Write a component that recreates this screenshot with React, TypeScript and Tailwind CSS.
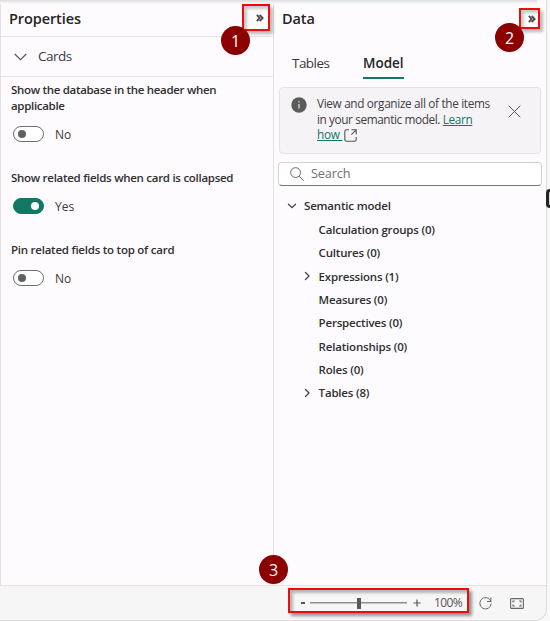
import type { ReactNode } from "react";

type SettingProps = { label: ReactNode; on?: boolean; className: string; track: string };

function Setting({ label, on = false, className, track }: SettingProps) {
  return (
    <div className={`flex flex-col pl-[10px] ${className}`}>
      <div className={`text-[11.5px] leading-[15.5px] font-semibold whitespace-nowrap text-[#302e2f] ${track}`}>{label}</div>
      <div className="mt-[13px] flex h-4 items-center">
        <div
          className={`ml-[2px] flex h-4 w-[31px] shrink-0 items-center rounded-full border px-[4px] ${
            on ? "justify-end border-[#117865] bg-[#117865]" : "border-[#706e6f] bg-white"
          }`}
        >
          <div className={`size-[8px] rounded-full ${on ? "bg-white" : "bg-[#616161]"}`} />
        </div>
        <span className="mt-[2px] ml-[11px] text-[12px] text-[#3b393a]">{on ? "Yes" : "No"}</span>
      </div>
    </div>
  );
}

function Collapse() {
  return (
    <svg width="8" height="8" viewBox="0 0 8 8" fill="none" stroke="#4f4b4d" strokeWidth="1.9">
      <path d="M.9.9 3.5 4 .9 7.1M3.7.9 6.6 4 3.7 7.1" />
    </svg>
  );
}

function Chevron({ open }: { open?: boolean }) {
  return (
    <svg width="10" height="10" viewBox="0 0 10 10" fill="none" stroke="#444" strokeWidth="1.3" strokeLinecap="round">
      <path d={open ? "M1.5 3.2 5 6.7 8.5 3.2" : "M3.5 1.5 7 5 3.5 8.5"} />
    </svg>
  );
}

const items = [
  { name: "Calculation groups (0)" },
  { name: "Cultures (0)" },
  { name: "Expressions (1)", arrow: true },
  { name: "Measures (0)" },
  { name: "Perspectives (0)" },
  { name: "Relationships (0)" },
  { name: "Roles (0)" },
  { name: "Tables (8)", arrow: true },
];

function Badge({ n, className }: { n: number; className: string }) {
  return (
    <div className={`absolute flex size-[29px] items-center justify-center rounded-full bg-[#8b0000] text-[16px] text-white ${className}`}>
      {n}
    </div>
  );
}

export default function App() {
  return (
    <div className="relative h-[621px] w-[550px] overflow-hidden bg-[#f8f8f8] font-['Open_Sans','Noto_Sans',sans-serif] text-[#252324]">
      <div className="flex h-[621px] w-[547px] flex-col overflow-hidden rounded-br-[12px] border-r border-b border-[#dedcde] bg-[#f6f6f6]">
        <div className="flex h-[586px] border-b border-[#eadfe1] bg-[#fefbff]">
          <section className="flex w-[274px] shrink-0 flex-col border-x border-x-[#e8dfe1]">
            <header className="flex h-[37px] items-center justify-between border-b border-[#eadfe1] pr-[9px] pl-[8px]">
              <h2 className="mt-[2px] text-[14.5px] font-semibold tracking-[-0.1px]">Properties</h2>
              <Collapse />
            </header>
            <div className="flex h-10 items-center border-b border-[#eadfe1] pl-[13px]">
              <svg width="13" height="8" viewBox="0 0 13 8" fill="none" stroke="#555" strokeWidth="1.1">
                <path d="m.8 1 5.7 5.7L12.2 1" />
              </svg>
              <span className="ml-[11px] text-[13.5px] tracking-[-0.5px] text-[#3b393a]">Cards</span>
            </div>
            <Setting className="mt-[5px]" track="tracking-[-0.31px]" label={<>Show the database in the header when<br />applicable</>} />
            <Setting className="mt-[27.5px]" track="tracking-[-0.28px]" label="Show related fields when card is collapsed" on />
            <Setting className="mt-[27.5px]" track="tracking-[-0.24px]" label="Pin related fields to top of card" />
          </section>

          <section className="flex w-[272px] shrink-0 flex-col">
            <header className="flex h-[37px] items-center justify-between pr-[10px] pl-[8px]">
              <h2 className="mt-[1px] text-[14.5px] font-semibold tracking-[-0.1px]">Data</h2>
              <Collapse />
            </header>
            <nav className="mt-[13px] flex h-[29px] pl-[18px] text-[13.5px]">
              <span className="h-[29px] w-[71px] pt-[3px] tracking-[-0.55px] text-[#3b393a]">Tables</span>
              <span className="h-[29px] border-b-2 border-[#117865] pt-[3px] font-semibold">Model</span>
            </nav>
            <div className="mt-[8px] ml-[5px] flex h-[67px] w-[262px] rounded-[4px] border border-[#e5e1e5] bg-[#f6f3f6]">
              <svg className="mt-[9px] ml-[11px] shrink-0" width="16" height="16" viewBox="0 0 16 16">
                <circle cx="8" cy="8" r="7.7" fill="#5b5b5b" />
                <path d="M8 7v4.5M8 4.3v1.3" stroke="#e8e6e8" strokeWidth="1.2" />
              </svg>
              <p className="mt-[8px] ml-[10px] w-[180px] text-[11.8px] leading-[15.5px] tracking-[-0.34px] whitespace-nowrap text-[#424042]">
                View and organize all of the items<br /><span className="tracking-[-0.4px]">in your semantic model. </span>
                <span className="text-[#117865] underline">Learn</span><br />
                <span className="text-[#117865] underline">how&nbsp;</span>
                <svg className="ml-[2px] inline-block align-[-3px]" width="13" height="13" viewBox="0 0 13 13" fill="none" stroke="#555" strokeWidth="1.1">
                  <path d="M5 .8H2.5A1.7 1.7 0 0 0 .8 2.5v8a1.7 1.7 0 0 0 1.7 1.7h8a1.7 1.7 0 0 0 1.7-1.7V8M7.5.8h4.7v4.7M12.2.8 7.3 5.7" />
                </svg>
              </p>
              <svg className="mt-[17px] ml-[11px]" width="13" height="13" viewBox="0 0 13 13" stroke="#555" strokeWidth="1">
                <path d="m.7.7 11.6 11.6m0-11.6L.7 12.3" />
              </svg>
            </div>
            <div className="mt-[8px] ml-[4px] flex h-[24px] w-[264px] items-center rounded-[4px] border border-[#d3d1d3] border-b-[#777] bg-white pl-[11px]">
              <svg width="14" height="14" viewBox="0 0 14 14" fill="none" stroke="#666" strokeWidth="1">
                <circle cx="5.6" cy="5.6" r="4.9" />
                <path d="m9.2 9.2 4.4 4.4" />
              </svg>
              <span className="ml-[7px] text-[12.7px] tracking-[-0.15px] text-[#707070]">Search</span>
            </div>
            <div className="mt-[8px] flex flex-col text-[11.5px] font-semibold tracking-[-0.19px] text-[#302e2f]">
              <div className="flex h-6 items-center pl-[13px]">
                <Chevron open />
                <span className="ml-[7px]">Semantic model</span>
              </div>
              {items.map((item) => (
                <div key={item.name} className="flex h-[23.3px] items-center pl-[28px]">
                  <span className="w-[16.6px]">{item.arrow && <Chevron />}</span>
                  <span>{item.name}</span>
                </div>
              ))}
            </div>
          </section>
        </div>
        <footer className="flex h-[34px] items-center pl-[301px] text-[#555]">
          <span className="h-[1.5px] w-[4px] bg-[#555]" />
          <div className="ml-[5px] flex h-[11px] w-[97px] items-center bg-[linear-gradient(#918f8b,#918f8b)] bg-[length:100%_1.5px] bg-center bg-no-repeat">
            <span className="ml-[47px] h-[11px] w-[4px] bg-[#5c5856]" />
          </div>
          <svg className="ml-[6px]" width="8" height="8" viewBox="0 0 8 8" stroke="#555" strokeWidth="1.2">
            <path d="M4 .5v7M.5 4h7" />
          </svg>
          <span className="ml-[13px] w-[28px] text-[12px] tracking-[-0.6px] whitespace-nowrap">100%</span>
          <svg className="ml-[17px]" width="13" height="13" viewBox="0 0 13 13" fill="none" stroke="#666" strokeWidth="1">
            <path d="M12 5.2A5.6 5.6 0 1 0 12.1 6.5M11.8.6v3.9H8" />
          </svg>
          <svg className="ml-[18px]" width="14" height="11" viewBox="0 0 14 11" fill="none" stroke="#666" strokeWidth="1.1">
            <rect x=".6" y=".6" width="12.8" height="9.8" rx="1" />
            <path d="M3 4.4V3h1.8M9.2 3H11v1.4M11 6.6V8H9.2M4.8 8H3V6.6" />
          </svg>
        </footer>
      </div>

      <div className="absolute top-0 left-0 h-[4px] w-[537px] bg-linear-to-b from-[#dadddd] to-[#fefbff]" />
      <div className="absolute top-[189px] left-[546px] h-[19px] w-[12px] rounded-[4px] border-[3px] border-[#242424] bg-[#ddd]" />
      <div className="absolute top-[4px] left-[242px] h-[27px] w-[28px] border-2 border-[#f00b0b] shadow-[3px_3px_3px_#0004,inset_3px_3px_3px_#0003]" />
      <div className="absolute top-[8px] left-[519px] h-[21px] w-[21px] border-2 border-[#f00b0b] shadow-[3px_3px_3px_#0004,inset_3px_3px_3px_#0003]" />
      <div className="absolute top-[588px] left-[288px] h-[25px] w-[181px] border-2 border-[#f00b0b] shadow-[3px_3px_3px_#0006,inset_3px_3px_3px_#0004]" />
      <Badge n={1} className="top-[26px] left-[221px]" />
      <Badge n={2} className="top-[23px] left-[495px]" />
      <Badge n={3} className="top-[555px] left-[259px]" />
    </div>
  );
}
